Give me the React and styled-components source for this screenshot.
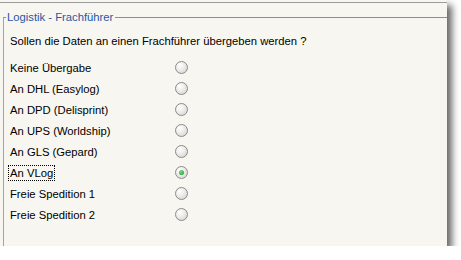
import React from "react";
import styled, { createGlobalStyle } from "styled-components";

const Global = createGlobalStyle`
  html, body { margin: 0; padding: 0; background: #ffffff; }
  body { font-family: Tahoma, "Liberation Sans", "DejaVu Sans", sans-serif; }
`;

const Frame = styled.div`
  width: 447px;
  height: 246px;
  background: #f7f6f1;
  box-shadow: 5px 5px 7px rgba(0, 0, 0, 0.6);
  overflow: hidden;
  box-sizing: border-box;
  padding-top: 2px;
`;

const TopRule = styled.div`
  height: 1px;
  background: #9c9c9c;
`;

const Group = styled.fieldset`
  margin: 7px 0 0 3px;
  padding: 8px 0 0 6px;
  border: none;
  border-top: 1px solid #8e8e8e;
  border-left: 1px solid #a3a3a3;
  min-height: 240px;
`;

const Legend = styled.legend`
  color: #2458a8;
  font-size: 11.25px;
  padding: 0 2px 0 1px;
  margin-left: -4px;
  line-height: 14px;
`;

const Question = styled.div`
  font-size: 11.25px;
  color: #000;
  line-height: 14px;
  margin: 2px 0 9px 0;
`;

const Options = styled.div`
  display: flex;
  flex-direction: column;
`;

const Row = styled.div`
  display: grid;
  grid-template-columns: 165px 13px;
  align-items: center;
  height: 21px;
  font-size: 11.25px;
  color: #000;
`;

const Label = styled.span`
  justify-self: start;
  line-height: 14px;
  padding: 0 1px;
  margin-left: -2px;
  border: 1px dotted ${(p) => (p.$focused ? "#000" : "transparent")};
`;

const Radio = styled.span`
  width: 13px;
  height: 13px;
  box-sizing: border-box;
  border-radius: 50%;
  border: 1px solid #8a8a8a;
  background: radial-gradient(circle at 35% 30%, #ffffff 0%, #eeeeec 40%, #cfcfcc 100%);
  display: flex;
  align-items: center;
  justify-content: center;
  &::after {
    content: "";
    width: 5px;
    height: 5px;
    border-radius: 50%;
    background: radial-gradient(circle at 40% 35%, #7ee07e 0%, #2faa3c 70%);
    display: ${(p) => (p.$checked ? "block" : "none")};
  }
`;

const options = [
  "Keine Übergabe",
  "An DHL (Easylog)",
  "An DPD (Delisprint)",
  "An UPS (Worldship)",
  "An GLS (Gepard)",
  "An VLog",
  "Freie Spedition 1",
  "Freie Spedition 2",
];

export default function App() {
  const selected = "An VLog";
  return (
    <>
      <Global />
      <Frame>
        <TopRule />
        <Group>
          <Legend>Logistik - Frachführer</Legend>
          <Question>Sollen die Daten an einen Frachführer übergeben werden ?</Question>
          <Options>
            {options.map((o) => (
              <Row key={o}>
                <Label $focused={o === selected}>{o}</Label>
                <Radio $checked={o === selected} />
              </Row>
            ))}
          </Options>
        </Group>
      </Frame>
    </>
  );
}
